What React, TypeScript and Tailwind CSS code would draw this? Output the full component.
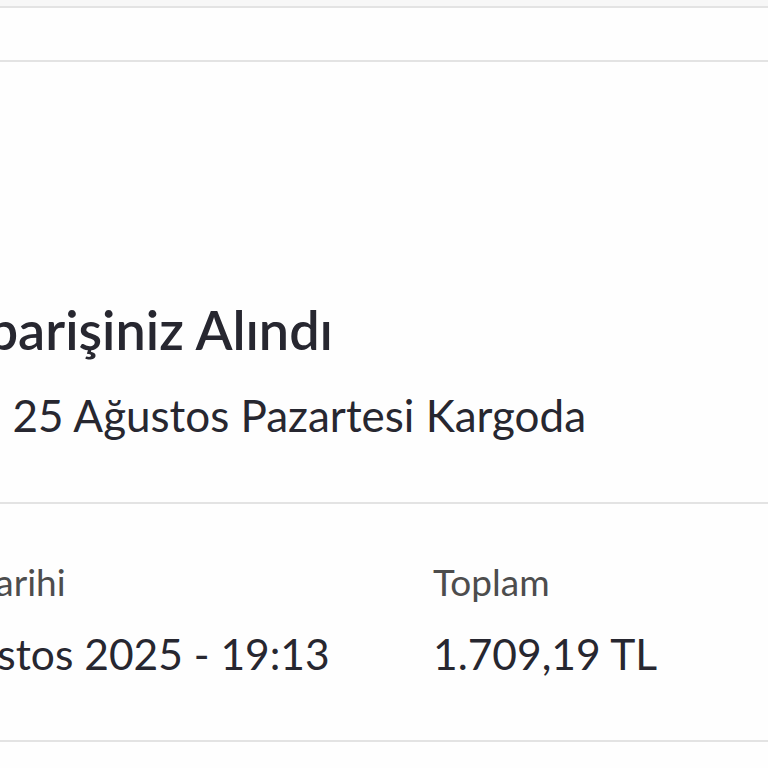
export default function App() {
  return (
    <div className="min-h-[768px] w-[768px] overflow-hidden bg-[#fefefe] font-['Lato','Noto_Sans',sans-serif] text-[#272730]">
      <div className="h-[6px] bg-[#f7f7f7]" />
      <div className="h-[54px] border-t-2 border-[#e3e3e3] bg-[#fefefe]" />

      <section className="border-t-2 border-b-2 border-[#e3e3e3] pt-[236px] pb-[61px]">
        <h1 className="ml-[-55px] whitespace-nowrap text-[54px] font-semibold leading-[64px]">Siparişiniz Alındı</h1>
        <p className="mt-[27px] ml-[-148px] whitespace-nowrap text-[44px] leading-[52px]">Tahmini 25 Ağustos Pazartesi Kargoda</p>
      </section>

      <section className="flex border-b-2 border-[#e3e3e3] pt-[55px] pb-[61px]">
        <div className="w-[433px] shrink-0 whitespace-nowrap">
          <div className="ml-[-137px] text-[37px] leading-[46px] text-[#4d4d4d]">Sipariş Tarihi</div>
          <div className="mt-[24px] ml-[-136px] text-[42.5px] leading-[50px]">25 Ağustos 2025 - 19:13</div>
        </div>
        <div className="whitespace-nowrap">
          <div className="text-[37px] leading-[46px] text-[#4d4d4d]">Toplam</div>
          <div className="mt-[24px] text-[42.5px] leading-[50px]">1.709,19 TL</div>
        </div>
      </section>
    </div>
  );
}
